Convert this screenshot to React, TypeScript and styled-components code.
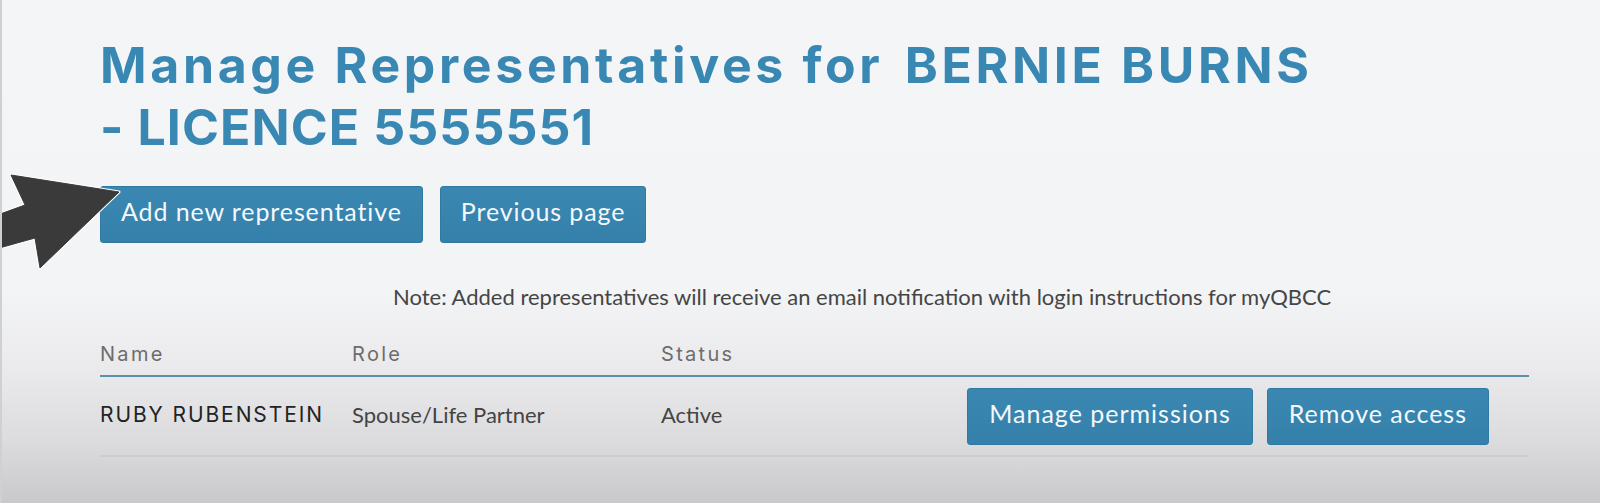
import React from "react";
import styled, { createGlobalStyle } from "styled-components";

const Global = createGlobalStyle`
  html, body { margin: 0; padding: 0; }
  body {
    background: #f3f4f6;
    font-family: "Lato", "Open Sans", sans-serif;
  }
`;

const Page = styled.div`
  position: relative;
  box-sizing: border-box;
  width: 1600px;
  height: 503px;
  overflow: hidden;
  padding: 34px 71px 0 100px;
  border-left: 2px solid #cfd0d2;
  background: linear-gradient(
    to bottom,
    #f4f5f7 0px,
    #f3f4f6 290px,
    #eaeaec 370px,
    #dcdcde 440px,
    #c9c9cb 503px
  );
`;

const Content = styled.div`
  margin-left: -2px;
`;

const Title = styled.h1`
  margin: 0;
  font-family: "Inter", "Noto Sans", sans-serif;
  font-weight: 700;
  font-size: 50px;
  line-height: 62px;
  color: #3988b3;
  letter-spacing: 3.65px;
  max-width: 1225px;
`;

const NameSpan = styled.span`
  margin-left: 6px;
`;

const LicenceSpan = styled.span`
  letter-spacing: 1.1px;
`;

const ButtonRow = styled.div`
  display: flex;
  gap: 17px;
  margin-top: 28px;
`;

const Button = styled.button`
  box-sizing: border-box;
  height: 57px;
  padding: 0 20px 7px;
  border: 1px solid #2f7aa3;
  border-radius: 3px;
  background: linear-gradient(to bottom, #3a88b2, #3480aa);
  color: #f4f8fb;
  font-family: "Lato", "Open Sans", sans-serif;
  font-size: 25px;
  font-weight: 400;
  letter-spacing: 0.9px;
  cursor: pointer;
  white-space: nowrap;
`;

const RowButton = styled(Button)`
  padding: 0 21px 7px;
  letter-spacing: 1px;
`;

const Note = styled.p`
  margin: 42px 0 0 293px;
  font-family: "Lato", "Open Sans", sans-serif;
  font-size: 22px;
  line-height: 24px;
  color: #454545;
  letter-spacing: 0;
`;

const Table = styled.div`
  margin-top: 26px;
`;

const HeaderRow = styled.div`
  display: grid;
  grid-template-columns: 252px 309px 1fr;
  align-items: center;
  height: 40px;
  border-bottom: 2px solid #5c8faa;
`;

const HeaderCell = styled.div`
  font-family: "Inter", "Noto Sans", sans-serif;
  font-size: 20px;
  letter-spacing: 2.3px;
  color: #6c6c6c;
  padding-bottom: 2px;
`;

const BodyRow = styled.div`
  display: grid;
  grid-template-columns: 252px 309px 1fr auto;
  align-items: center;
  height: 78px;
  border-bottom: 2px solid #cdcdcf;
  padding-right: 40px;
`;

const NameCell = styled.div`
  font-family: "Inter", "Noto Sans", sans-serif;
  font-size: 21px;
  font-weight: 400;
  color: #232323;
  letter-spacing: 1.9px;
  padding-bottom: 3px;
`;

const Cell = styled.div`
  font-family: "Lato", "Open Sans", sans-serif;
  font-size: 22px;
  color: #444;
  padding-bottom: 3px;
`;

const Actions = styled.div`
  display: flex;
  gap: 14px;
  padding-top: 1px;
`;

const ArrowSvg = styled.svg`
  position: absolute;
  left: 0;
  top: 0;
  pointer-events: none;
`;

const Arrow = () => (
  <ArrowSvg width="130" height="280" viewBox="0 0 130 280">
    <polygon
      points="9,175 117,192 38,268 33,238 -10,250 -10,217 23,205"
      fill="#3b3a3a"
      stroke="#ffffff"
      strokeWidth="3"
      strokeLinejoin="round"
    />
    <polygon
      points="9,175 117,192 38,268 33,238 -10,250 -10,217 23,205"
      fill="#3b3a3a"
      stroke="#3b3a3a"
      strokeWidth="1"
      strokeLinejoin="round"
    />
  </ArrowSvg>
);

export default function App() {
  return (
    <>
      <Global />
      <Page>
        <Content>
          <Title>
            Manage Representatives for <NameSpan>BERNIE BURNS</NameSpan>{" "}
            <LicenceSpan>- LICENCE 5555551</LicenceSpan>
          </Title>
          <ButtonRow>
            <Button>Add new representative</Button>
            <Button>Previous page</Button>
          </ButtonRow>
          <Note>
            Note: Added representatives will receive an email notification with login instructions for myQBCC
          </Note>
          <Table>
            <HeaderRow>
              <HeaderCell>Name</HeaderCell>
              <HeaderCell>Role</HeaderCell>
              <HeaderCell>Status</HeaderCell>
            </HeaderRow>
            <BodyRow>
              <NameCell>RUBY RUBENSTEIN</NameCell>
              <Cell>Spouse/Life Partner</Cell>
              <Cell>Active</Cell>
              <Actions>
                <RowButton>Manage permissions</RowButton>
                <RowButton>Remove access</RowButton>
              </Actions>
            </BodyRow>
          </Table>
        </Content>
        <Arrow />
      </Page>
    </>
  );
}
